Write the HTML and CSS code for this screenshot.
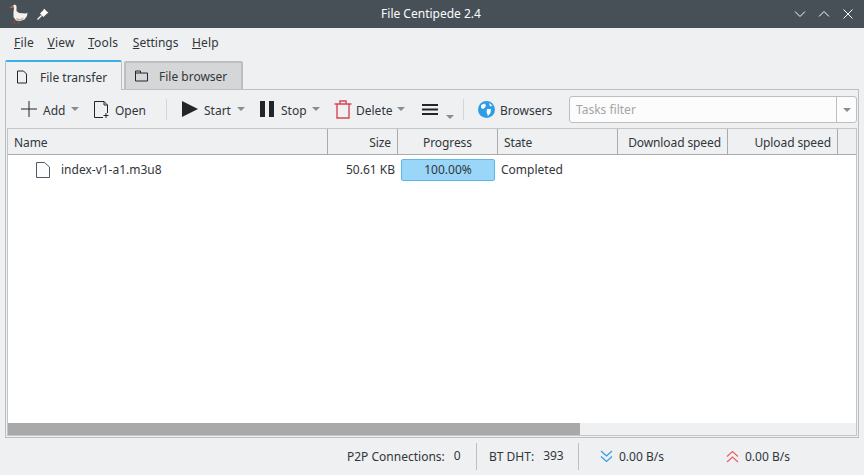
FILE: index.html
```html
<!DOCTYPE html>
<html lang="en">
<head>
    <meta charset="UTF-8">
    <meta name="viewport" content="width=device-width, initial-scale=1.0">
    <title>File Centipede 2.4</title>
    <link rel="stylesheet" href="styles.css">
</head>
<body>
    <div class="titlebar">
        <div class="title-left">
            <svg width="20" height="24" viewBox="0 0 20 24">
                <path d="M5 3.500 L7 2.500 L8.500 4 L8.500 9 L11 11 L18 11.500 L19.500 10.500 L19 14 L16.500 17.500 L12 19 L8 18.500 L5.500 15 L5.500 10 L6 6 Z" fill="#f4f0ec"/>
                <path d="M8 16 L12 17 L16 15.500 L14 18.500 L9 18.500 Z" fill="#b9b4b0"/>
                <path d="M1 5.500 L5 3.500 L5.500 6 Z" fill="#dc5a3a"/>
                <path d="M6.500 18.500 L6 21.500 M10.500 19 L10.500 21.500" stroke="#a8452f" stroke-width="1.500"/>
            </svg>
            <svg width="12" height="12" viewBox="0 0 12 12">
                <path d="M7 0.500 L11.500 5 L10 5.500 L6.500 9 L3 5.500 L6.500 2 Z" fill="#fcfcfc"/>
                <path d="M0.500 11.500 L4.500 7.500" stroke="#fcfcfc" stroke-width="1.300"/>
            </svg>
        </div>
        <div class="title-text">File Centipede 2.4</div>
        <div class="title-buttons">
            <svg width="12" height="8" viewBox="0 0 12 8"><path d="M1 1.500 L6 6.500 L11 1.500" class="win-stroke"/></svg>
            <svg width="12" height="8" viewBox="0 0 12 8"><path d="M1 6.500 L6 1.500 L11 6.500" class="win-stroke"/></svg>
            <svg width="12" height="12" viewBox="0 0 12 12"><path d="M1.500 1.500 L10.500 10.500 M10.500 1.500 L1.500 10.500" class="win-stroke"/></svg>
        </div>
    </div>

    <div class="menubar">
        <span class="menu-item"><u>F</u>ile</span>
        <span class="menu-item"><u>V</u>iew</span>
        <span class="menu-item"><u>T</u>ools</span>
        <span class="menu-item menu-settings"><u>S</u>ettings</span>
        <span class="menu-item"><u>H</u>elp</span>
    </div>

    <div class="tabs">
        <div class="tab active">
            <svg width="12" height="14" viewBox="0 0 12 14"><path d="M1.500 1 H7.500 L10.500 4 V13 H1.500 Z" class="doc"/></svg>
            File transfer
        </div>
        <div class="tab">
            <svg width="13" height="12" viewBox="0 0 13 12"><path d="M0.500 1 H5.500 V3 H12.500 V11 H0.500 Z M0.500 3 H5.500" class="doc"/></svg>
            File browser
        </div>
    </div>

    <div class="panel">
        <div class="toolbar">
            <div class="tool tool-add">
                <svg width="16" height="16" viewBox="0 0 16 16"><path d="M8 0 V16 M0 8 H16" stroke="#232629" fill="none"/></svg>
                <span>Add</span><i class="caret"></i>
            </div>
            <div class="tool tool-open">
                <svg width="15" height="17" viewBox="0 0 15 17"><path d="M9 16.500 H0.500 V0.500 H10 L13.500 4 V12 M10 0.500 V4 H13.500 M9.500 14.500 H14.500 M12 12 V17" class="doc"/></svg>
                <span>Open</span>
            </div>
            <div class="sep"></div>
            <div class="tool tool-start">
                <svg width="16" height="16" viewBox="0 0 16 16"><path d="M0 0 L16 8 L0 16 Z" fill="#232629"/></svg>
                <span>Start</span><i class="caret"></i>
            </div>
            <div class="tool tool-stop">
                <svg width="14" height="16" viewBox="0 0 14 16"><path d="M0 0 H5 V16 H0 Z M9 0 H14 V16 H9 Z" fill="#232629"/></svg>
                <span>Stop</span><i class="caret"></i>
            </div>
            <div class="tool tool-delete">
                <svg width="18" height="19" viewBox="0 0 18 19"><path d="M3 4.500 V18 H15 V4.500 M0.500 4 H17.500 M6 3.500 V1 H12 V3.500" fill="none" stroke="#da4453" stroke-width="1.400"/></svg>
                <span>Delete</span><i class="caret"></i>
            </div>
            <div class="tool tool-more">
                <svg width="16" height="11" viewBox="0 0 16 11"><path d="M0 1 H16 M0 5.500 H16 M0 10 H16" stroke="#232629" stroke-width="2"/></svg>
                <i class="caret caret-low"></i>
            </div>
            <div class="sep"></div>
            <div class="tool tool-browsers">
                <svg width="17" height="17" viewBox="0 0 17 17">
                    <circle cx="8.500" cy="8.500" r="8.500" fill="#2e9de4"/>
                    <path d="M3 4 L7 2.500 L8 5 L5.500 8 L3 7 Z M9 8 L13 8 L12.500 12 L10 15 L8.500 11 Z M11 2 L14.500 4.500 L12 5.500 Z" fill="#fcfcfc"/>
                </svg>
                <span>Browsers</span>
            </div>
            <div class="filter">
                <span class="filter-text">Tasks filter</span>
                <span class="filter-arrow"><i class="caret"></i></span>
            </div>
        </div>

        <div class="table">
            <div class="thead">
                <div class="th col-name">Name</div>
                <div class="th col-size right">Size</div>
                <div class="th col-progress center">Progress</div>
                <div class="th col-state">State</div>
                <div class="th col-down right">Download speed</div>
                <div class="th col-up right">Upload speed</div>
                <div class="th col-rest"></div>
            </div>
            <div class="tbody">
                <div class="row">
                    <div class="td col-name file-cell">
                        <svg width="14" height="16" viewBox="0 0 14 16"><path d="M0.500 0.500 H8.500 L13.500 5 V15.500 H0.500 Z" fill="#fcfcfc" stroke="#4d5965"/></svg>
                        index-v1-a1.m3u8
                    </div>
                    <div class="td col-size right size-cell">50.61 KB</div>
                    <div class="td col-progress progress-cell"><div class="progress">100.00%</div></div>
                    <div class="td col-state state-cell">Completed</div>
                </div>
            </div>
            <div class="hscroll"><div class="hscroll-thumb"></div></div>
        </div>
    </div>

    <div class="statusbar">
        <span class="status-item status-p2p">P2P Connections:<b>0</b></span>
        <span class="status-item status-dht">BT DHT:<b>393</b></span>
        <span class="status-speed status-down">
            <svg width="13" height="13" viewBox="0 0 13 13"><path d="M1 1 L6.500 6 L12 1 M1 6.500 L6.500 11.500 L12 6.500" fill="none" stroke="#2e9de4" stroke-width="1.200"/></svg>
            0.00 B/s
        </span>
        <span class="status-speed status-up">
            <svg width="13" height="13" viewBox="0 0 13 13"><path d="M1 6.500 L6.500 1.500 L12 6.500 M1 12 L6.500 7 L12 12" fill="none" stroke="#e5606c" stroke-width="1.200"/></svg>
            0.00 B/s
        </span>
    </div>
</body>
</html>
```

FILE: styles.css
```css
* {
    box-sizing: border-box;
}

body {
    font-family: 'Noto Sans', sans-serif;
    font-size: 12px;
    background-color: #eff0f1;
    color: #31363b;
    margin: 0;
    width: 864px;
    height: 475px;
    overflow: hidden;
    display: flex;
    flex-direction: column;
}

svg {
    display: block;
    flex-shrink: 0;
}

.titlebar {
    height: 28px;
    background-color: #475057;
    color: #fcfcfc;
    display: flex;
    align-items: center;
    padding: 0 10px 0 8px;
}

.title-left {
    flex: 1;
    display: flex;
    align-items: center;
    gap: 9px;
}

.title-text {
    padding-bottom: 1px;
}

.title-buttons {
    flex: 1;
    display: flex;
    align-items: center;
    justify-content: flex-end;
    gap: 12px;
}

.win-stroke {
    fill: none;
    stroke: #fcfcfc;
}

.menubar {
    height: 29px;
    display: flex;
    align-items: center;
    gap: 13.5px;
    padding-left: 14px;
    letter-spacing: 0.2px;
}

.menu-settings {
    margin-left: 1px;
    letter-spacing: 0;
}

.tabs {
    display: flex;
    height: 30px;
    padding-left: 5px;
    gap: 2px;
    margin-top: 3px;
    position: relative;
    z-index: 1;
}

.tab {
    width: 119px;
    height: 29px;
    margin-top: 1px;
    background-color: #d5d6d8;
    border: 2px solid #bcbec0;
    border-bottom: 1px solid #bcbec0;
    border-radius: 2px 2px 0 0;
    display: flex;
    align-items: center;
    gap: 11px;
    padding-left: 9px;
}

.tab.active {
    width: 117px;
    height: 30px;
    margin-top: 0;
    background-color: #eff0f1;
    border: 1px solid #bcbec0;
    border-top: 2px solid #3daee9;
    border-bottom: none;
    gap: 12px;
    padding-left: 10px;
    padding-top: 2px;
    margin-bottom: -1px;
}

.doc {
    fill: none;
    stroke: #232629;
}

.panel {
    margin: -1px 5px 0;
    width: 854px;
    height: 349px;
    border: 1px solid #bcbec0;
    display: flex;
    flex-direction: column;
    padding: 0 1px 1px;
}

.toolbar {
    height: 38px;
    display: flex;
    align-items: center;
    flex-shrink: 0;
}

.tool {
    display: flex;
    align-items: center;
    gap: 6px;
}

.tool span {
    padding-top: 2px;
}

.caret {
    display: block;
    width: 0;
    height: 0;
    border-left: 4.500px solid transparent;
    border-right: 4.500px solid transparent;
    border-top: 4px solid #8a8d90;
}

.caret-low {
    margin-top: 16px;
}

.tool-add {
    margin-left: 14px;
    width: 73px;
}

.tool-open {
    width: 72px;
}

.sep {
    width: 1px;
    height: 21px;
    background-color: #d3d5d6;
}

.tool-start {
    margin-left: 15px;
    width: 78px;
}

.tool-stop {
    width: 74px;
    gap: 7px;
}

.tool-stop .caret {
    margin-left: -2px;
}

.tool-delete {
    width: 87px;
    gap: 4px;
}

.tool-more {
    width: 42px;
    padding-left: 1px;
    gap: 8px;
}

.tool-browsers {
    margin-left: 14px;
    gap: 5px;
}

.filter {
    margin: 1px 0 0 auto;
    width: 288px;
    height: 27px;
    background-color: #fcfcfc;
    border: 1px solid #bcbec0;
    border-radius: 3px;
    display: flex;
    align-items: center;
    justify-content: space-between;
    padding-left: 6px;
}

.filter-text {
    color: #a2a5a8;
}

.filter-arrow {
    width: 20px;
    height: 100%;
    border-left: 1px solid #bcbec0;
    display: flex;
    align-items: center;
    justify-content: center;
}

.table {
    flex: 1;
    display: flex;
    flex-direction: column;
    border: 1px solid #c4c6c8;
    background-color: #fff;
    min-height: 0;
}

.thead {
    display: flex;
    height: 26px;
    flex-shrink: 0;
    background-color: #eff0f1;
    border-bottom: 1px solid #a9abad;
}

.th {
    border-right: 1px solid #a9abad;
    padding: 1px 6px 0;
    line-height: 25px;
    letter-spacing: -0.1px;
}

.right {
    text-align: right;
}

.center {
    text-align: center;
}

.col-name { width: 320px; }
.col-size { width: 70px; }
.col-progress { width: 100px; }
.col-state { width: 120px; }
.col-down { width: 110px; }
.col-up { width: 110px; }
.col-rest { flex: 1; border-right: none; }

.tbody {
    flex: 1;
    min-height: 0;
}

.row {
    display: flex;
    height: 29px;
    align-items: center;
}

.file-cell {
    display: flex;
    align-items: center;
    gap: 11px;
    padding-left: 28px;
}

.size-cell {
    padding-right: 3px;
}

.progress-cell {
    padding: 0 3px;
}

.progress {
    height: 22px;
    line-height: 20px;
    text-align: center;
    background-color: #99d6f7;
    border: 1px solid #5cb8ec;
    border-radius: 2px;
}

.state-cell {
    padding-left: 3px;
}

.hscroll {
    height: 12px;
    background-color: #eff0f1;
    flex-shrink: 0;
}

.hscroll-thumb {
    width: 572px;
    height: 100%;
    background-color: #a9a9a9;
}

.statusbar {
    flex: 1;
    display: flex;
    align-items: center;
}

.status-item {
    display: flex;
    align-items: center;
    height: 27px;
    border-right: 1px solid #bcbec0;
}

.status-item b {
    font-weight: normal;
    margin-top: -2px;
}

.status-p2p {
    margin-left: 347px;
    width: 130px;
    gap: 9px;
}

.status-dht {
    width: 102px;
    padding-left: 12px;
    gap: 9px;
}

.status-speed {
    display: flex;
    align-items: center;
    gap: 6px;
}

.status-down {
    margin-left: 21px;
    width: 126px;
}
```
